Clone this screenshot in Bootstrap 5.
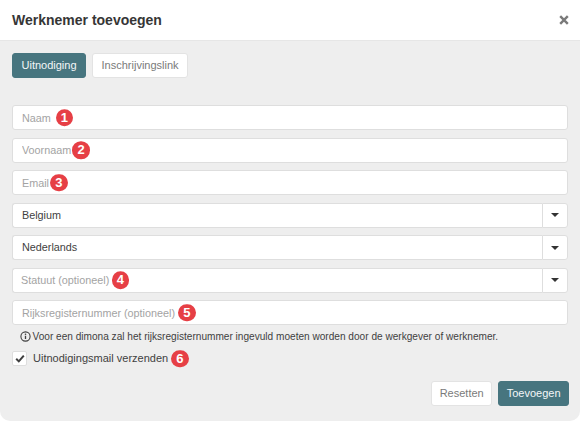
<!DOCTYPE html>
<html lang="nl">
<head>
    <meta charset="UTF-8">
    <meta name="viewport" content="width=device-width, initial-scale=1.0">
    <title>Werknemer toevoegen</title>
    <link rel="stylesheet" href="https://cdn.jsdelivr.net/npm/bootstrap@5.3.0/dist/css/bootstrap.min.css">
    <style>
        html, body { height: 421px; overflow: hidden; background: #fff; }
        body { font-family: "Liberation Sans", Arial, sans-serif; font-size: 11px; color: #3f3f3f; }
        .sheet { height: 421px; background: #eee; border-radius: 0 0 10px 10px; overflow: hidden; }
        .sheet-head { height: 41px; background: #fff; border-bottom: 1px solid #e6e6e6; padding: 0 12px; }
        .sheet-title { font-size: 14px; font-weight: 700; color: #363636; margin: 0; }
        .close-x { width: 10px; height: 10px; padding: 0; border: 0; background: none; display: flex; margin-right: -1px; }
        .sheet-body { padding: 12px 12px 0; }
        .btn-teal, .btn-plain { height: 25px; padding: 0 8.5px; font-size: 11px; line-height: 23px; border-radius: 3px; }
        .btn-teal { background: #47757f; border: 1px solid #47757f; color: #f4f7f8; }
        .btn-plain { background: #fff; border: 1px solid #e3e3e3; color: #7a7a7a; }
        .tabs-row { gap: 6px; margin-bottom: 27px; }
        .field-stack { display: flex; flex-direction: column; gap: 7.5px; }
        .field-wrap { position: relative; }
        .field-input, .field-input:focus {
            height: 25px; min-height: 0; padding: 0 9px; font-size: 10.8px; color: #3f3f3f;
            border: 1px solid #dedede; border-radius: 3px; box-shadow: none; background: #fff;
        }
        .field-input::placeholder { color: #a3a3a3; opacity: 1; }
        .pick-box { display: flex; height: 25px; }
        .pick-text {
            flex: 1; line-height: 22px; padding: 0 9px; background: #fff; color: #3f3f3f; font-size: 10.8px;
            border: 1px solid #dedede; border-right: 0; border-radius: 3px 0 0 3px;
        }
        .pick-text.empty { color: #a3a3a3; padding-left: 8px; }
        .pick-caret {
            width: 26px; background: #fff; border: 1px solid #dedede; border-radius: 0 3px 3px 0;
            display: flex; align-items: center; justify-content: center;
        }
        .pick-caret::after {
            content: ""; border-left: 4.5px solid transparent; border-right: 4.5px solid transparent;
            border-top: 4.5px solid #333;
        }
        .step-pin {
            position: absolute; top: 50%; transform: translateY(-50%);
            width: 17.5px; height: 17.5px; border-radius: 50%; background: #e63f45; color: #fff;
            font-size: 13px; font-weight: 700; line-height: 17.5px; text-align: center;
        }
        .pin-1 { left: 43.5px; }
        .pin-2 { left: 60.25px; }
        .pin-3 { left: 38px; }
        .pin-4 { left: 99.5px; }
        .pin-5 { left: 166px; }
        .pin-6 { left: 159px; }
        .info-line { font-size: 10.1px; color: #3f3f3f; margin: 4px 0 0 7.5px; height: 15px; line-height: 15px; gap: 2px; }
        .check-line { position: relative; height: 15px; margin-top: 7px; gap: 6px; }
        .tick-box {
            width: 15px; height: 15px; background: #fff; border: 1px solid #dedede; border-radius: 2px;
            display: flex; align-items: center; justify-content: center; flex: none;
        }
        .foot-row { gap: 6px; margin-top: 15px; margin-right: -1px; }
        .foot-row .btn { padding: 0 7.5px; }
    </style>
</head>
<body>
    <div class="sheet">
        <div class="sheet-head d-flex align-items-center justify-content-between">
            <h1 class="sheet-title">Werknemer toevoegen</h1>
            <button type="button" class="close-x" aria-label="Sluiten">
                <svg width="10" height="10" viewBox="0 0 10 10"><path d="M1.2 1.2 8.8 8.8M8.8 1.2 1.2 8.8" stroke="#7a7a7a" stroke-width="2.4"/></svg>
            </button>
        </div>
        <div class="sheet-body">
            <div class="d-flex tabs-row">
                <button type="button" class="btn btn-teal">Uitnodiging</button>
                <button type="button" class="btn btn-plain">Inschrijvingslink</button>
            </div>
            <form class="field-stack">
                <div class="field-wrap">
                    <input type="text" class="form-control field-input" placeholder="Naam">
                    <span class="step-pin pin-1">1</span>
                </div>
                <div class="field-wrap">
                    <input type="text" class="form-control field-input" placeholder="Voornaam">
                    <span class="step-pin pin-2">2</span>
                </div>
                <div class="field-wrap">
                    <input type="text" class="form-control field-input" placeholder="Email">
                    <span class="step-pin pin-3">3</span>
                </div>
                <div class="pick-box">
                    <div class="pick-text">Belgium</div>
                    <div class="pick-caret"></div>
                </div>
                <div class="pick-box">
                    <div class="pick-text">Nederlands</div>
                    <div class="pick-caret"></div>
                </div>
                <div class="field-wrap">
                    <div class="pick-box">
                        <div class="pick-text empty">Statuut (optioneel)</div>
                        <div class="pick-caret"></div>
                    </div>
                    <span class="step-pin pin-4">4</span>
                </div>
                <div class="field-wrap">
                    <input type="text" class="form-control field-input" placeholder="Rijksregisternummer (optioneel)">
                    <span class="step-pin pin-5">5</span>
                </div>
            </form>
            <div class="info-line d-flex align-items-center">
                <svg width="11" height="11" viewBox="0 0 11 11"><circle cx="5.5" cy="5.5" r="4.6" fill="none" stroke="#3f3f3f" stroke-width="1.1"/><path d="M5.5 4.8v3.2" stroke="#3f3f3f" stroke-width="1.3"/><circle cx="5.5" cy="3.2" r=".8" fill="#3f3f3f"/></svg>
                <span>Voor een dimona zal het rijksregisternummer ingevuld moeten worden door de werkgever of werknemer.</span>
            </div>
            <div class="check-line d-flex align-items-center">
                <span class="tick-box">
                    <svg width="10" height="9" viewBox="0 0 10 9"><path d="M1.2 4.8 3.8 7.4 8.8 1.6" fill="none" stroke="#3f3f3f" stroke-width="2"/></svg>
                </span>
                <span>Uitnodigingsmail verzenden</span>
                <span class="step-pin pin-6">6</span>
            </div>
            <div class="d-flex justify-content-end foot-row">
                <button type="button" class="btn btn-plain">Resetten</button>
                <button type="button" class="btn btn-teal">Toevoegen</button>
            </div>
        </div>
    </div>
    <script src="https://cdn.jsdelivr.net/npm/bootstrap@5.3.0/dist/js/bootstrap.bundle.min.js"></script>
</body>
</html>
